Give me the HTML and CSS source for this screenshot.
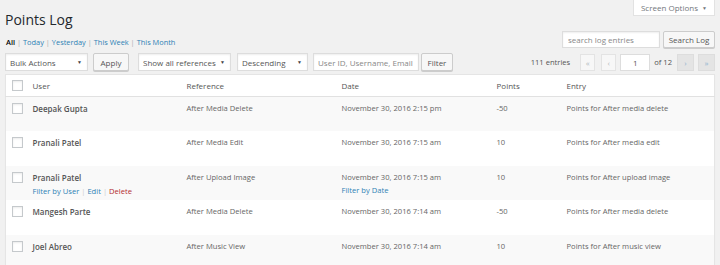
FILE: index.html
```html
<!DOCTYPE html>
<html lang="en">
<head>
    <meta charset="UTF-8">
    <title>Points Log</title>
    <link rel="stylesheet" href="styles.css">
</head>
<body>
    <div class="wrap">
        <div class="head-row">
            <h1>Points Log</h1>
            <button class="screen-options">Screen Options <span class="caret">&#9660;</span></button>
        </div>

        <div class="views-row">
            <ul class="subsubsub">
                <li><a class="current" href="#">All</a> |</li>
                <li><a href="#">Today</a> |</li>
                <li><a href="#">Yesterday</a> |</li>
                <li><a href="#">This Week</a> |</li>
                <li><a href="#">This Month</a></li>
            </ul>
            <div class="search-box">
                <input class="search-input" type="text" placeholder="search log entries">
                <button class="button">Search Log</button>
            </div>
        </div>

        <div class="tablenav">
            <span class="select-wrap bulk"><select><option>Bulk Actions</option></select></span>
            <button class="button apply">Apply</button>
            <span class="select-wrap refs"><select><option>Show all references</option></select></span>
            <span class="select-wrap order"><select><option>Descending</option></select></span>
            <input class="user-input" type="text" placeholder="User ID, Username, Email address">
            <button class="button filter">Filter</button>

            <div class="pages">
                <span class="count">111 entries</span>
                <span class="page-btn disabled first">&laquo;</span>
                <span class="page-btn disabled prev">&lsaquo;</span>
                <input class="current-page" type="text" value="1">
                <span class="of">of 12</span>
                <span class="page-btn next">&rsaquo;</span>
                <span class="page-btn last">&raquo;</span>
            </div>
        </div>

        <table class="log-table">
            <colgroup>
                <col class="c-check">
                <col class="c-user">
                <col class="c-ref">
                <col class="c-date">
                <col class="c-points">
                <col class="c-entry">
            </colgroup>
            <thead>
                <tr>
                    <th class="check"><span class="checkbox"></span></th>
                    <th>User</th>
                    <th>Reference</th>
                    <th>Date</th>
                    <th>Points</th>
                    <th>Entry</th>
                </tr>
            </thead>
            <tbody>
                <tr>
                    <td class="check"><span class="checkbox"></span></td>
                    <td><strong>Deepak Gupta</strong><div class="row-actions">&nbsp;</div></td>
                    <td>After Media Delete</td>
                    <td>November 30, 2016 2:15 pm</td>
                    <td>-50</td>
                    <td>Points for After media delete</td>
                </tr>
                <tr>
                    <td class="check"><span class="checkbox"></span></td>
                    <td><strong>Pranali Patel</strong><div class="row-actions">&nbsp;</div></td>
                    <td>After Media Edit</td>
                    <td>November 30, 2016 7:15 am</td>
                    <td>10</td>
                    <td>Points for After media edit</td>
                </tr>
                <tr>
                    <td class="check"><span class="checkbox"></span></td>
                    <td><strong>Pranali Patel</strong>
                        <div class="row-actions"><a href="#">Filter by User</a> <span class="sep">|</span> <a href="#">Edit</a> <span class="sep">|</span> <a class="delete" href="#">Delete</a></div>
                    </td>
                    <td>After Upload Image</td>
                    <td>November 30, 2016 7:15 am<div class="row-actions"><a href="#">Filter by Date</a></div></td>
                    <td>10</td>
                    <td>Points for After upload image</td>
                </tr>
                <tr>
                    <td class="check"><span class="checkbox"></span></td>
                    <td><strong>Mangesh Parte</strong><div class="row-actions">&nbsp;</div></td>
                    <td>After Media Delete</td>
                    <td>November 30, 2016 7:14 am</td>
                    <td>-50</td>
                    <td>Points for After media delete</td>
                </tr>
                <tr>
                    <td class="check"><span class="checkbox"></span></td>
                    <td><strong>Joel Abreo</strong><div class="row-actions">&nbsp;</div></td>
                    <td>After Music View</td>
                    <td>November 30, 2016 7:14 am</td>
                    <td>10</td>
                    <td>Points for After music view</td>
                </tr>
            </tbody>
        </table>
    </div>
</body>
</html>
```

FILE: styles.css
```css
* {
    margin: 0;
    padding: 0;
    box-sizing: border-box;
}

body {
    background: #f1f1f1;
    font-family: 'Open Sans', 'Noto Sans', sans-serif;
    font-size: 8px;
    color: #555;
    overflow: hidden;
}

.wrap {
    padding: 0 5px;
}

a {
    color: #2f82b5;
    text-decoration: none;
}

/* header */
.head-row {
    display: flex;
    justify-content: space-between;
    align-items: flex-start;
}

h1 {
    font-size: 14px;
    font-weight: 400;
    line-height: 20px;
    color: #23282d;
    padding-top: 10px;
}

.screen-options {
    width: 82px;
    height: 16px;
    background: #fff;
    border: 1px solid #e2e2e2;
    border-top: none;
    font-family: inherit;
    font-size: 8px;
    color: #72777c;
}

.caret {
    font-size: 5px;
    margin-left: 2px;
    vertical-align: 1px;
}

/* views + search */
.views-row {
    display: flex;
    justify-content: space-between;
    align-items: flex-end;
    margin-top: 1px;
}

.subsubsub {
    list-style: none;
    display: flex;
    color: #aaa;
    font-size: 7.4px;
    line-height: 12px;
    margin-left: 1px;
}

.subsubsub li {
    margin-right: 2px;
}

.subsubsub .current {
    color: #000;
    font-weight: 600;
}

.search-box {
    display: flex;
    gap: 3px;
}

.search-input {
    width: 98px;
    height: 17px;
    border: 1px solid #ddd;
    box-shadow: inset 0 1px 2px rgba(0, 0, 0, 0.07);
    font-family: inherit;
    font-size: 8px;
    padding: 0 5px;
    color: #555;
}

.search-input::placeholder,
.user-input::placeholder {
    color: #888;
}

.button {
    height: 17px;
    padding: 0 4px;
    background: #f7f7f7;
    border: 1px solid #ccc;
    border-radius: 2px;
    box-shadow: 0 1px 0 #ccc;
    font-family: inherit;
    font-size: 8px;
    color: #555;
    white-space: nowrap;
}

.search-box .button {
    width: 52px;
}

/* table nav */
.tablenav {
    display: flex;
    align-items: center;
    height: 18px;
    margin-top: 5px;
}

.select-wrap {
    position: relative;
    display: block;
    height: 18px;
}

.select-wrap select {
    appearance: none;
    width: 100%;
    height: 18px;
    background: #fff;
    border: 1px solid #ddd;
    box-shadow: inset 0 1px 2px rgba(0, 0, 0, 0.07);
    font-family: inherit;
    font-size: 8px;
    color: #555;
    padding: 0 4px;
}

.select-wrap::after {
    content: '\25BC';
    position: absolute;
    right: 6px;
    top: 6px;
    font-size: 5px;
    color: #444;
}

.bulk { width: 83px; }
.refs { width: 93px; margin-left: 9px; }
.order { width: 71px; margin-left: 6px; }

.tablenav .button {
    height: 18px;
}

.apply {
    width: 36px;
    margin-left: 5px;
}

.user-input {
    width: 106px;
    height: 18px;
    margin-left: 5px;
    border: 1px solid #ddd;
    box-shadow: inset 0 1px 2px rgba(0, 0, 0, 0.07);
    font-family: inherit;
    font-size: 8px;
    padding: 0 4px;
}

.filter {
    width: 32px;
    margin-left: 2px;
}

.pages {
    margin-left: auto;
    display: flex;
    align-items: center;
}

.count {
    font-size: 7.6px;
    margin-right: 10px;
}

.page-btn {
    display: flex;
    align-items: center;
    justify-content: center;
    width: 15px;
    height: 17px;
    font-size: 8px;
    border: 1px solid #e3e3e3;
}

.page-btn.disabled {
    background: #f7f7f7;
    color: #b4b9be;
}

.page-btn.first {
    margin-right: 6px;
}

.page-btn.prev {
    margin-right: 4px;
}

.page-btn.next,
.page-btn.last {
    width: 17px;
    background: #e4e4e4;
    border-color: #ddd;
    color: #8fb3cf;
}

.page-btn.next {
    margin-right: 4px;
}

.current-page {
    width: 30px;
    height: 17px;
    margin-right: 4px;
    border: 1px solid #ddd;
    font-family: inherit;
    font-size: 8px;
    text-align: center;
    color: #555;
}

.of {
    font-size: 7.6px;
    margin-right: 5px;
}

/* table */
.log-table {
    width: 100%;
    margin-top: 3px;
    border-collapse: collapse;
    table-layout: fixed;
    background: #fff;
    border: 1px solid #e5e5e5;
    box-shadow: 0 1px 1px rgba(0, 0, 0, 0.04);
}

.c-check { width: 23px; }
.c-user { width: 154px; }
.c-ref { width: 155px; }
.c-date { width: 155px; }
.c-points { width: 70px; }

th {
    text-align: left;
    font-weight: 400;
    color: #555;
    padding: 4px 4px;
    line-height: 13px;
    border-bottom: 1px solid #e1e1e1;
}

td {
    vertical-align: top;
    padding: 5px 4px 2.4px;
    font-size: 7.6px;
    line-height: 13px;
    color: #666;
}

td strong {
    font-size: 8px;
    font-weight: 600;
    color: #555;
}

tbody tr:nth-child(odd) {
    background: #f9f9f9;
}

.check {
    padding-left: 6px;
    padding-right: 0;
}

td.check {
    padding-top: 6px;
}

.checkbox {
    display: block;
    width: 11px;
    height: 11px;
    background: #fff;
    border: 1px solid #c5c9cc;
    box-shadow: inset 0 1px 2px rgba(0, 0, 0, 0.08);
}

.row-actions {
    line-height: 13px;
    color: #ccc;
}

.row-actions .delete {
    color: #b32d2e;
}
```
